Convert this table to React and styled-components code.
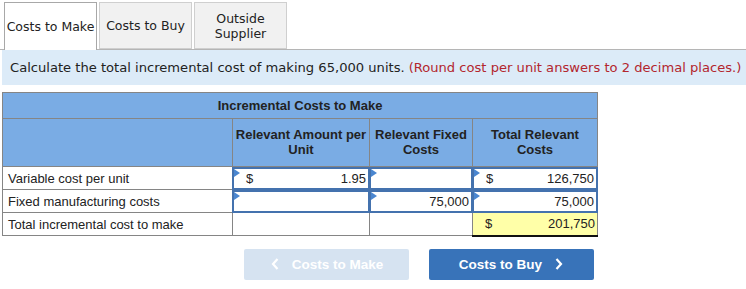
import styled, { createGlobalStyle } from "styled-components";

const GlobalStyle = createGlobalStyle`
  body {
    margin: 0;
    background: #ffffff;
    font-family: "DejaVu Sans", Verdana, sans-serif;
  }
`;

const rows = [
  { label: "Variable cost per unit", unit: "1.95", fixed: "", total: "126,750", dollarUnit: true, dollarTotal: true },
  { label: "Fixed manufacturing costs", unit: "", fixed: "75,000", total: "75,000", dollarUnit: false, dollarTotal: false },
];

export default function App() {
  return (
    <Page>
      <GlobalStyle />
      <TabBar>
        <Tab active>Costs to Make</Tab>
        <Tab>Costs to Buy</Tab>
        <Tab>
          Outside
          <br />
          Supplier
        </Tab>
      </TabBar>
      <Instruction>
        Calculate the total incremental cost of making 65,000 units.{" "}
        <Red>(Round cost per unit answers to 2 decimal places.)</Red>
      </Instruction>
      <Table>
        <colgroup>
          <col style={{ width: 230 }} />
          <col style={{ width: 137 }} />
          <col style={{ width: 103 }} />
          <col style={{ width: 125 }} />
        </colgroup>
        <thead>
          <tr>
            <HeadCell colSpan={4} height={24}>
              Incremental Costs to Make
            </HeadCell>
          </tr>
          <tr>
            <HeadCell height={46} />
            <HeadCell>Relevant Amount per Unit</HeadCell>
            <HeadCell>Relevant Fixed Costs</HeadCell>
            <HeadCell>Total Relevant Costs</HeadCell>
          </tr>
        </thead>
        <tbody>
          {rows.map((r) => (
            <tr key={r.label}>
              <LabelCell>{r.label}</LabelCell>
              <InputCell>
                <InputBox>
                  {r.dollarUnit && <Dollar>$</Dollar>}
                  <Value>{r.unit}</Value>
                </InputBox>
              </InputCell>
              <InputCell>
                <InputBox>
                  <Value>{r.fixed}</Value>
                </InputBox>
              </InputCell>
              <InputCell>
                <InputBox>
                  {r.dollarTotal && <Dollar>$</Dollar>}
                  <Value>{r.total}</Value>
                </InputBox>
              </InputCell>
            </tr>
          ))}
          <tr>
            <LabelCell>Total incremental cost to make</LabelCell>
            <PlainCell />
            <PlainCell />
            <TotalCell>
              <Dollar>$</Dollar>
              <Value>201,750</Value>
            </TotalCell>
          </tr>
        </tbody>
      </Table>
      <ButtonRow>
        <NavButton disabled>
          <Chevron viewBox="0 0 10 14">
            <path d="M7.5 2 L3 7 L7.5 12" />
          </Chevron>
          Costs to Make
        </NavButton>
        <NavButton>
          Costs to Buy
          <Chevron viewBox="0 0 10 14">
            <path d="M2.5 2 L7 7 L2.5 12" />
          </Chevron>
        </NavButton>
      </ButtonRow>
    </Page>
  );
}

const Page = styled.div`
  padding-top: 2px;
  width: 746px;
`;

const TabBar = styled.div`
  display: flex;
  gap: 2px;
  padding-left: 4px;
  border-bottom: 1px solid #b5b5b5;
  height: 47px;
`;

const Tab = styled.div`
  box-sizing: border-box;
  width: 93px;
  height: ${(p) => (p.active ? "48px" : "47px")};
  display: flex;
  align-items: center;
  justify-content: center;
  text-align: center;
  font-size: 12.5px;
  line-height: 15px;
  color: #222;
  background: ${(p) => (p.active ? "#ffffff" : "#f1f1f1")};
  border: 1px solid ${(p) => (p.active ? "#a8a8a8" : "#cfcfcf")};
  border-bottom: ${(p) => (p.active ? "none" : "1px solid #cfcfcf")};
  padding-bottom: ${(p) => (p.active ? "1px" : "0")};
`;

const Instruction = styled.div`
  margin-left: 2px;
  height: 35px;
  display: flex;
  align-items: center;
  padding-left: 8px;
  white-space: nowrap;
  background: #dcebf8;
  font-size: 13.1px;
  color: #222;
`;

const Red = styled.span`
  color: #b3262e;
  margin-left: 4px;
`;

const Table = styled.table`
  margin: 7px 0 0 2px;
  border-collapse: collapse;
  table-layout: fixed;
  width: 596px;
  font-family: "Liberation Sans", Arial, sans-serif;
  font-size: 13px;
  color: #222;
  border: 1px solid #858585;
`;

const HeadCell = styled.th`
  background: #7aace4;
  border: 1px solid #858585;
  height: ${(p) => (p.height ? `${p.height}px` : "auto")};
  padding: 0 2px 1px;
  font-weight: bold;
  font-size: 13px;
  line-height: 15px;
  color: #222;
  text-align: center;
  vertical-align: middle;
`;

const LabelCell = styled.td`
  border: 1px solid #858585;
  height: 22px;
  padding: 0 0 0 5px;
  white-space: nowrap;
`;

const PlainCell = styled.td`
  border: 1px solid #858585;
`;

const InputCell = styled.td`
  border: 1px solid #858585;
  padding: 0;
  height: 22px;
`;

const InputBox = styled.div`
  position: relative;
  box-sizing: border-box;
  height: 23px;
  margin: -1px;
  border: 2px solid #4472ae;
  display: flex;
  align-items: center;
  padding: 0 2px 0 12px;
  background: #fff;

  &::before {
    content: "";
    position: absolute;
    top: 0;
    left: 0;
    border-top: 4px solid transparent;
    border-bottom: 4px solid transparent;
    border-left: 6px solid #4a86d0;
  }
`;

const TotalCell = styled.td`
  background: #ffffa8;
  border: 1px solid #858585;
  border-bottom: 2px solid #111;
  padding: 0 2px 0 12px;
  height: 21px;
  white-space: nowrap;
`;

const Dollar = styled.span`
  flex: 0 0 auto;
`;

const Value = styled.span`
  flex: 1;
  text-align: right;
  ${TotalCell} & {
    float: right;
  }
`;

const ButtonRow = styled.div`
  display: flex;
  gap: 20px;
  margin: 12px 0 0 244px;
`;

const NavButton = styled.button`
  width: 165px;
  height: 31px;
  border: none;
  border-radius: 2px;
  display: flex;
  align-items: center;
  justify-content: center;
  gap: 12px;
  font-family: "Liberation Sans", Arial, sans-serif;
  font-weight: bold;
  font-size: 13.5px;
  color: #fff;
  background: ${(p) => (p.disabled ? "#d6e3f1" : "#3873b9")};
`;

const Chevron = styled.svg`
  width: 10px;
  height: 14px;
  fill: none;
  stroke: #fff;
  stroke-width: 2.2;
`;
